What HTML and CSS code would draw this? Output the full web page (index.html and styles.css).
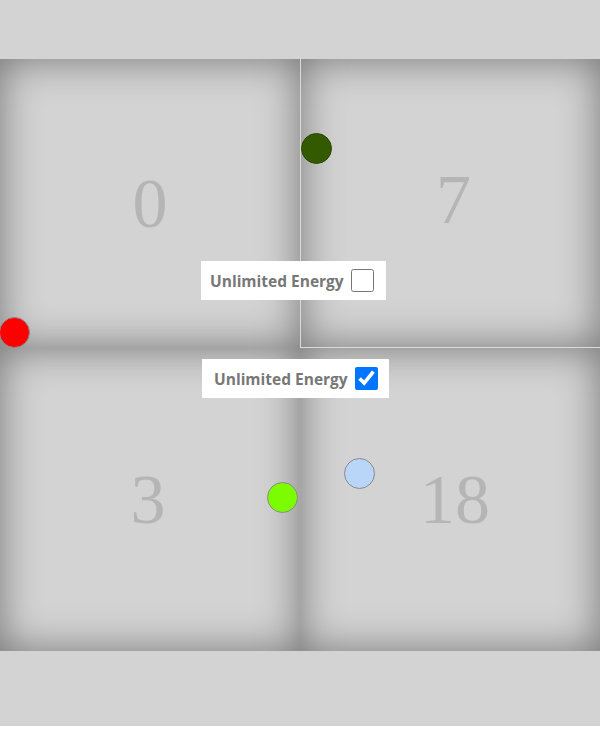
FILE: index.html
```html
<!DOCTYPE html>
<html>
<head>
<meta charset="utf-8">
<link rel="stylesheet" href="styles.css">
</head>
<body>
<div class="stage">
  <div class="board">
    <div class="tile"><span class="num">0</span></div>
    <div class="tile tile-raised"><span class="num">7</span></div>
    <div class="tile"><span class="num num-3">3</span></div>
    <div class="tile"><span class="num num-18">18</span></div>
  </div>

  <label class="energy energy-a"><span class="energy-text">Unlimited Energy</span><input type="checkbox" class="energy-box"></label>
  <label class="energy energy-b"><span class="energy-text">Unlimited Energy</span><input type="checkbox" class="energy-box" checked></label>

  <span class="dot dot-dark" style="left:301px; top:133px"></span>
  <span class="dot dot-red" style="left:-1px; top:317px"></span>
  <span class="dot dot-lime" style="left:267px; top:482px"></span>
  <span class="dot dot-blue" style="left:344px; top:458px"></span>
</div>
</body>
</html>
```
FILE: styles.css
```css
html, body {
  margin: 0;
  padding: 0;
  background: #ffffff;
}

.stage {
  position: relative;
  width: 600px;
  height: 726px;
  background: #d3d3d3;
  overflow: hidden;
  padding-top: 59px;
  box-sizing: border-box;
}

.board {
  display: grid;
  grid-template-columns: 300px 300px;
  grid-template-rows: 289px 303px;
}

.tile {
  display: flex;
  align-items: center;
  justify-content: center;
  background: #d3d3d3;
  box-shadow: inset 0 0 40px rgba(0, 0, 0, 0.45);
}

.tile-raised {
  box-sizing: border-box;
  border-left: 1px solid #dadada;
  border-bottom: 1px solid #dadada;
}

.num {
  font-family: "Liberation Serif", "Times New Roman", serif;
  font-size: 70px;
  line-height: 1;
  color: #b5b5b5;
}

.tile-raised .num {
  margin-left: 6px;
  margin-top: -6px;
}

.num-3 {
  margin-left: -4px;
}

.num-18 {
  margin-left: 10px;
}

.energy {
  position: absolute;
  display: flex;
  align-items: center;
  gap: 7px;
  height: 39px;
  box-sizing: border-box;
  background: #ffffff;
  font-family: "Open Sans", "Noto Sans", sans-serif;
  font-weight: 700;
  font-size: 15.5px;
  color: #777777;
}

.energy-a {
  left: 201px;
  top: 261px;
  width: 185px;
  padding-left: 9px;
}

.energy-b {
  left: 202px;
  top: 359px;
  width: 187px;
  padding-left: 12px;
}

.energy-box {
  width: 23px;
  height: 23px;
  margin: 0;
}

.dot {
  position: absolute;
  width: 31px;
  height: 31px;
  box-sizing: border-box;
  border-radius: 50%;
  border: 1px solid #8a8a8a;
}

.dot-dark { background: #345a00; border-color: #2a4a00; }
.dot-red { background: #ff0000; }
.dot-lime { background: #7cfc00; }
.dot-blue { background: #b9d5f8; }
```
